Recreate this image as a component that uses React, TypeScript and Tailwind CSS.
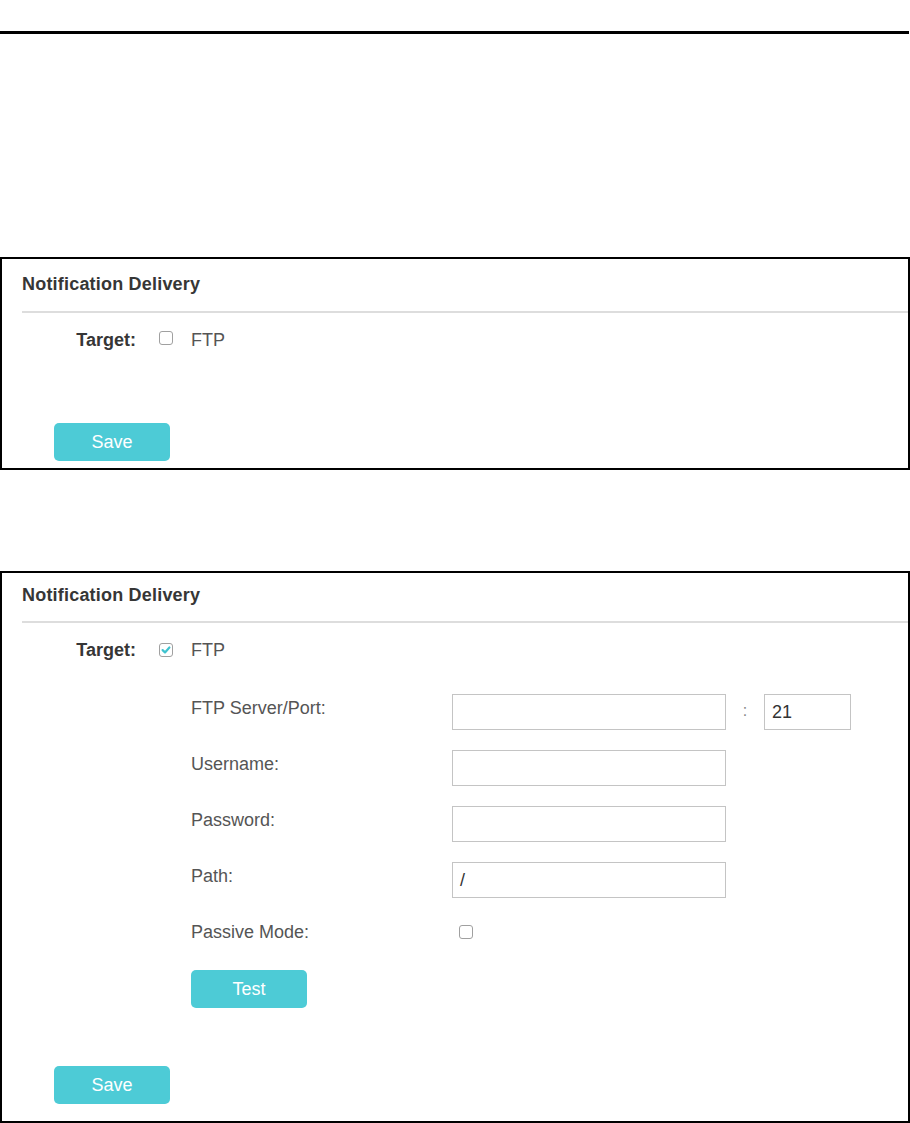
import React from "react";

function Checkbox({ checked = false }: { checked?: boolean }) {
  return (
    <span className="inline-flex h-[14px] w-[14px] shrink-0 items-center justify-center rounded-[3px] border border-[#a0a0a0] bg-white">
      {checked && (
        <svg width="10" height="10" viewBox="0 0 10 10">
          <path d="M1.6 5.1 L4 7.4 L8.4 2.5" fill="none" stroke="#3fc3cf" strokeWidth="2.2" strokeLinecap="round" strokeLinejoin="round" />
        </svg>
      )}
    </span>
  );
}

function Button({ label }: { label: string }) {
  return (
    <div className="flex h-[38px] w-[116px] items-center justify-center rounded-[5px] bg-[#4dcbd6] text-[18px] leading-[24px] text-white">
      {label}
    </div>
  );
}

function Header({ pt, sep }: { pt: string; sep: string }) {
  return (
    <div className={`pl-[20px] ${pt}`}>
      <div className="text-[18px] font-bold leading-[24px] tracking-[0.2px] text-[#363636]">Notification Delivery</div>
      <div className={`h-[2px] bg-[#dddddd] ${sep}`} />
    </div>
  );
}

function TargetRow({ checked }: { checked: boolean }) {
  return (
    <div className="mt-[15px] flex h-[24px] items-center">
      <div className="w-[134px] text-right text-[18px] font-bold leading-[24px] text-[#363636]">Target:</div>
      <div className="ml-[23px]">
        <Checkbox checked={checked} />
      </div>
      <div className="ml-[18px] text-[18px] leading-[24px] text-[#555555]">FTP</div>
    </div>
  );
}

function Field({ label, value = "", children }: { label: string; value?: string; children?: React.ReactNode }) {
  return (
    <div className="flex h-[36px] items-start">
      <div className="w-[261px] pt-[2px] text-[18px] leading-[24px] text-[#555555]">{label}</div>
      <div className="flex h-[36px] w-[274px] items-center border border-[#c4c4c4] bg-white pl-[7px] text-[18px] text-[#333333]">
        {value}
      </div>
      {children}
    </div>
  );
}

export default function App() {
  return (
    <div className="min-h-[1123px] w-[910px] bg-white pt-[31px] font-['Liberation_Sans',Arial,sans-serif]">
      <div className="h-[3px] w-[909px] bg-black" />

      <div className="mt-[223px] h-[213px] w-[910px] border-2 border-black">
        <Header pt="pt-[13px]" sep="mt-[15px]" />
        <TargetRow checked={false} />
        <div className="ml-[52px] mt-[71px]">
          <Button label="Save" />
        </div>
      </div>

      <div className="mt-[101px] h-[552px] w-[910px] border-2 border-black">
        <Header pt="pt-[10px]" sep="mt-[14px]" />
        <TargetRow checked={true} />
        <div className="mt-[32px] flex flex-col gap-[20px] pl-[189px]">
          <Field label="FTP Server/Port:">
            <div className="w-[38px] text-center text-[16px] leading-[34px] text-[#888888]">:</div>
            <div className="flex h-[36px] w-[87px] items-center border border-[#c4c4c4] bg-white pl-[7px] text-[18px] text-[#333333]">
              21
            </div>
          </Field>
          <Field label="Username:" />
          <Field label="Password:" />
          <Field label="Path:" value="/" />
          <div className="flex h-[36px] items-start">
            <div className="w-[261px] pt-[2px] text-[18px] leading-[24px] text-[#555555]">Passive Mode:</div>
            <div className="ml-[7px] mt-[4px]">
              <Checkbox />
            </div>
          </div>
        </div>
        <div className="ml-[189px] mt-[16px]">
          <Button label="Test" />
        </div>
        <div className="ml-[52px] mt-[58px]">
          <Button label="Save" />
        </div>
      </div>
    </div>
  );
}
